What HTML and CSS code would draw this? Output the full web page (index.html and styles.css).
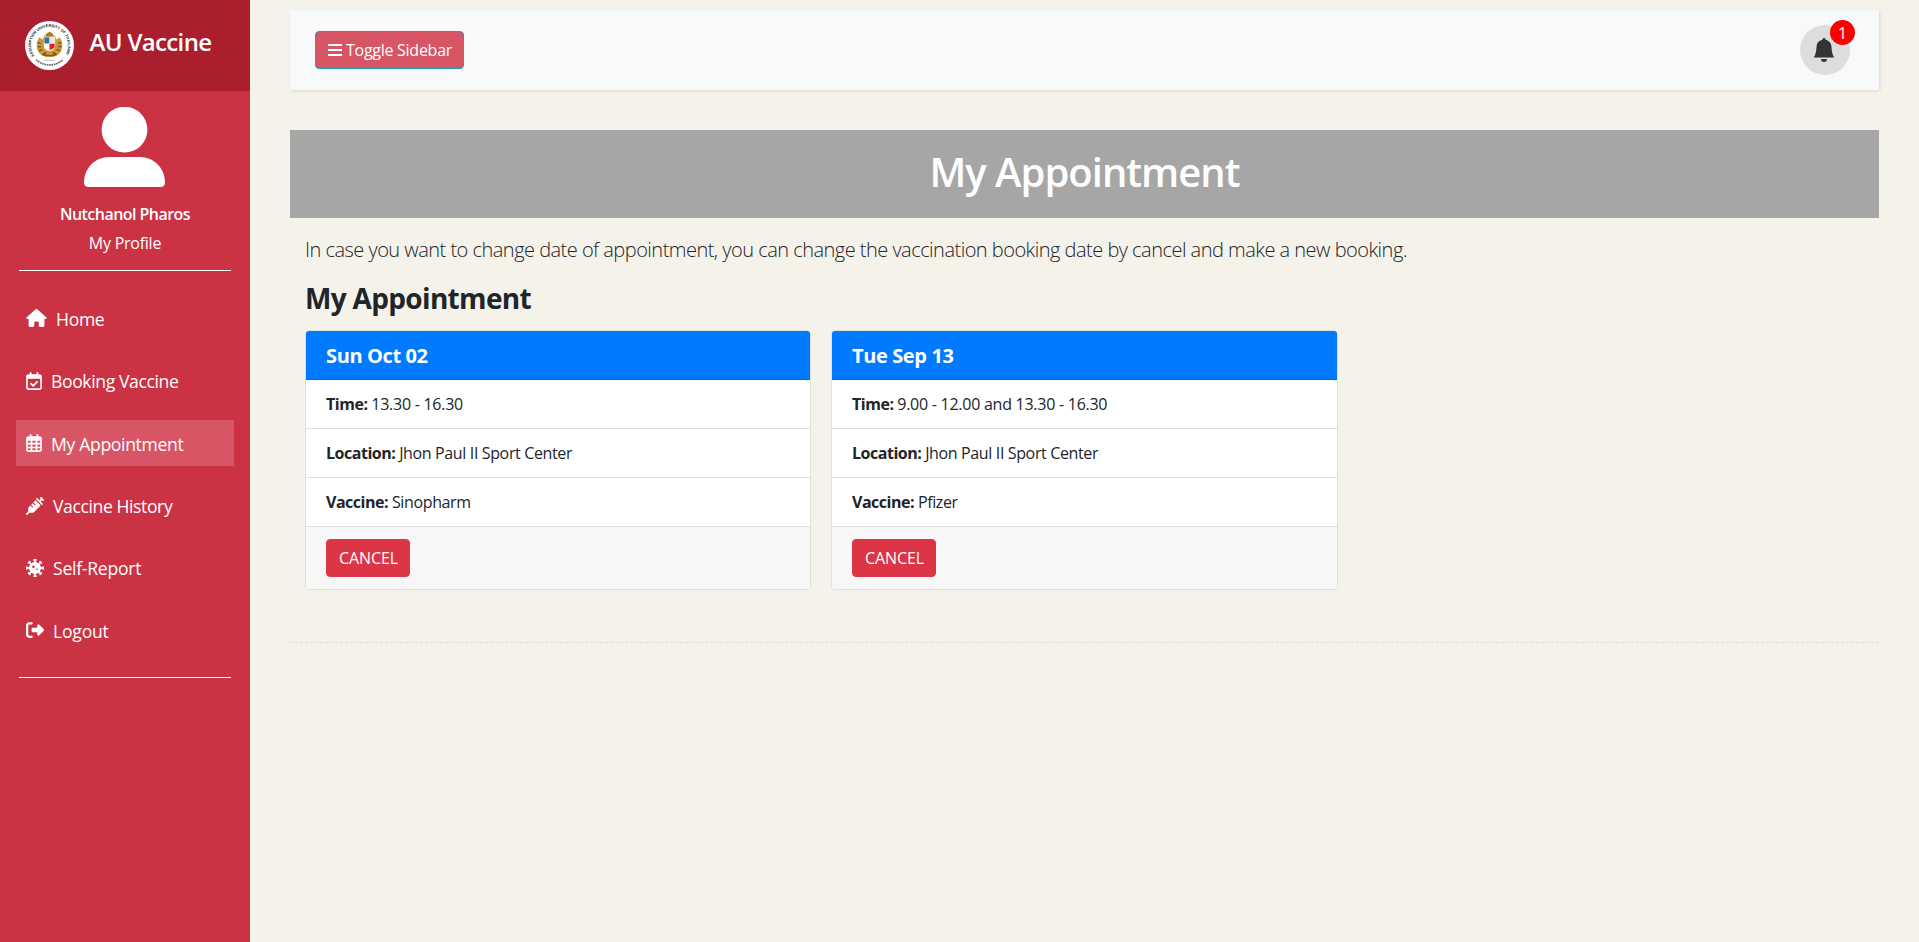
FILE: index.html
```html
<!DOCTYPE html>
<html lang="en">
<head>
<meta charset="utf-8">
<title>AU Vaccine</title>
<link rel="stylesheet" href="styles.css">
</head>
<body>
<div class="wrapper">
  <nav class="sidebar">
    <div class="brand">
      <svg class="logo" viewBox="0 0 48 48">
        <defs>
          <path id="ring-top" d="M9.300 34.300A18 18 0 1 1 38.700 34.300"/>
        </defs>
        <circle cx="24" cy="24" r="24" fill="#fff"/>
        <text class="seal-text" textLength="76" lengthAdjust="spacingAndGlyphs"><textPath href="#ring-top">ASSUMPTION UNIVERSITY OF THAILAND</textPath></text>
        <path d="M11 38A19.300 19.300 0 0 0 37 38" fill="none" stroke="#666" stroke-width="1.700" stroke-dasharray="1.600 .7"/>
        <path d="M14 16q-4 6-2 12 2 6 8 7h8q6-1 8-7 2-6-2-12l-3 2-2-4-3 1-2-4-2 4-3-1-2 4z" fill="#c99a35"/>
        <path d="M12.500 21l3 1M12.500 25l3 0M14 29l3-1M35.500 21l-3 1M35.500 25l-3 0M34 29l-3-1M18 32l3-1M30 32l-3-1" stroke="#6f4e15" stroke-width="1.200"/>
        <path d="M20 13.500q4-5.500 8 0l-1 2h-6z" fill="#a97b28"/>
        <path d="M18.500 15.500h11v9q0 4-5.500 5-5.500-1-5.500-5z" fill="#fff"/>
        <path d="M19 16h5v6h-5z" fill="#3d6d9e"/>
        <path d="M24 22h5v3q0 2-5 3.500z" fill="#e01c24"/>
        <path d="M24 16h5v6h-5z" fill="#e6e3e3"/>
        <path d="M17 32.500q7 3 14 0" fill="none" stroke="#80591b" stroke-width="1.500"/>
        <path d="M19 38.500h10" stroke="#aaa" stroke-width=".8"/>
      </svg>
      <span class="brand-name">AU Vaccine</span>
    </div>
    <div class="profile">
      <svg class="avatar" viewBox="0 0 81 80"><circle cx="40.500" cy="22.700" r="22.900"/><path d="M25 50h31c14 0 25 11.500 25 25.500 0 3-2 4.500-4.500 4.500h-72C2 80 0 78.500 0 75.500 0 61.500 11 50 25 50z"/></svg>
      <strong class="name">Nutchanol Pharos</strong>
      <a class="my-profile">My Profile</a>
    </div>
    <ul class="menu">
      <li><svg style="width:21px" viewBox="0 0 576 512"><path d="M575.800 255.500c0 18-15 32.100-32 32.100h-32l.7 160.200c0 2.700-.2 5.400-.5 8.100V472c0 22.100-17.900 40-40 40H392c-22.100 0-40-17.900-40-40V384c0-17.700-14.300-32-32-32H256c-17.700 0-32 14.300-32 32v88c0 22.100-17.900 40-40 40H104c-22.100 0-40-17.900-40-40V287.600H32c-18 0-32-14-32-32.100 0-9 3-17 10-24L266.400 8c7-7 15-8 22-8s15 2 21 7L564.800 231.500c8 7 12 15 11 24z"/></svg><span class="l-home">Home</span></li>
      <li><svg style="width:16px" viewBox="0 0 448 512"><path d="M128 0c13.300 0 24 10.700 24 24V64H296V24c0-13.300 10.700-24 24-24s24 10.700 24 24V64h40c35.300 0 64 28.700 64 64V448c0 35.300-28.700 64-64 64H64c-35.300 0-64-28.700-64-64V128C0 92.700 28.700 64 64 64h40V24c0-13.300 10.700-24 24-24zM400 192H48V448c0 8.800 7.200 16 16 16H384c8.800 0 16-7.200 16-16V192zM329 297L217 409c-9.400 9.400-24.600 9.400-33.900 0l-64-64c-9.400-9.400-9.400-24.600 0-33.900s24.600-9.400 33.900 0l47 47 95-95c9.400-9.400 24.600-9.400 33.900 0s9.400 24.600 0 33.900z"/></svg><span class="l-book">Booking Vaccine</span></li>
      <li class="active"><svg style="width:16px" viewBox="0 0 448 512"><path d="M152 24c0-13.300-10.700-24-24-24s-24 10.700-24 24V64H64C28.700 64 0 92.700 0 128V448c0 35.300 28.700 64 64 64H384c35.300 0 64-28.700 64-64V128c0-35.300-28.700-64-64-64H344V24c0-13.300-10.700-24-24-24s-24 10.700-24 24V64H152V24zM48 192h80v56H48V192zm0 104h80v64H48V296zm128 0h96v64H176V296zm144 0h80v64H320V296zm80-48H320V192h80v56zm0 160v40c0 8.800-7.200 16-16 16H320V408h80zm-128 0v56H176V408h96zm-144 0v56H64c-8.800 0-16-7.200-16-16V408h80zM272 248H176V192h96v56z"/></svg><span>My Appointment</span></li>
      <li><svg style="width:18px" viewBox="0 0 512 512"><path d="M441 7l32 32 32 32c9.400 9.400 9.400 24.600 0 33.900s-24.600 9.400-33.900 0l-15-15L417.900 128l55 55c9.400 9.400 9.400 24.600 0 33.900s-24.600 9.400-33.900 0l-72-72L295 73c-9.400-9.400-9.400-24.600 0-33.900s24.600-9.400 33.900 0l55 55L422.100 56 407 41c-9.400-9.400-9.400-24.600 0-33.900s24.600-9.400 33.900 0zM210.300 155.700l61.100-61.100c.3 .3 .6 .7 1 1l16 16 56 56 56 56 16 16c.3 .3 .6 .6 1 1l-191 191c-10.500 10.500-24.700 16.400-39.600 16.400H97.900L41 505c-9.400 9.400-24.600 9.400-33.900 0s-9.400-24.600 0-33.900l57-57V325.300c0-14.900 5.900-29.100 16.400-39.600l43.300-43.300 57 57c6.200 6.200 16.400 6.200 22.600 0s6.200-16.400 0-22.600l-57-57 41.400-41.400 57 57c6.200 6.200 16.400 6.200 22.600 0s6.200-16.400 0-22.600l-57-57z"/></svg><span class="l-hist">Vaccine History</span></li>
      <li><svg style="width:18px" viewBox="0 0 512 512">
        <g fill="none" stroke="#fff" stroke-width="50" stroke-linecap="round">
          <path d="M256 26V486M228 25h56M228 487h56M26 256H486M25 228v56M487 228v56"/>
          <path d="M256 26V486M228 25h56M228 487h56M26 256H486M25 228v56M487 228v56" transform="rotate(45 256 256)"/>
        </g>
        <path fill-rule="evenodd" d="M256 84a172 172 0 1 1 0 344 172 172 0 1 1 0-344z"/>
        <circle cx="210" cy="222" r="36" fill="#cb3244"/><circle cx="315" cy="290" r="22" fill="#cb3244"/></svg><span class="l-self">Self-Report</span></li>
      <li><svg style="width:18px" viewBox="0 0 512 512"><path d="M377.900 105.900L500.700 228.700c7.200 7.200 11.300 17.100 11.300 27.300s-4.100 20.100-11.300 27.300L377.900 406.100c-6.400 6.400-15 9.900-24 9.900-18.700 0-33.900-15.200-33.900-33.900V320H192c-17.700 0-32-14.300-32-32v-64c0-17.700 14.300-32 32-32h128v-62.100c0-18.700 15.200-33.900 33.900-33.900 9 0 17.600 3.600 24 9.900zM160 96H96c-17.700 0-32 14.300-32 32v256c0 17.700 14.300 32 32 32h64c17.700 0 32 14.300 32 32s-14.300 32-32 32H96c-53 0-96-43-96-96V128C0 75 43 32 96 32h64c17.700 0 32 14.300 32 32s-14.300 32-32 32z"/></svg><span class="l-out">Logout</span></li>
    </ul>
  </nav>

  <main class="content">
    <header class="topbar">
      <button class="btn btn-toggle"><svg viewBox="0 0 14 12"><path d="M0 0h14v2H0zM0 5h14v2H0zM0 10h14v2H0z"/></svg>Toggle Sidebar</button>
      <div class="bell">
        <svg viewBox="0 0 16 16"><path d="M8 16a2 2 0 0 0 2-2H6a2 2 0 0 0 2 2zm.995-14.901a1 1 0 1 0-1.990 0A5.002 5.002 0 0 0 3 6c0 1.098-.5 6-2 7h14c-1.500-1-2-5.902-2-7 0-2.420-1.720-4.440-4.005-4.901z"/></svg>
        <span class="count">1</span>
      </div>
    </header>

    <h1 class="banner">My Appointment</h1>

    <section class="section">
      <p class="lead">In case you want to change date of appointment, you can change the vaccination booking date by cancel and make a new booking.</p>
      <h3 class="heading">My Appointment</h3>
      <div class="cards">
        <article class="card">
          <h5 class="card-head">Sun Oct 02</h5>
          <p class="row"><b>Time:</b> <span class="time">13.30 - 16.30</span></p>
          <p class="row"><b>Location:</b> Jhon Paul II Sport Center</p>
          <p class="row"><b>Vaccine:</b> Sinopharm</p>
          <div class="card-foot"><button class="btn btn-cancel">CANCEL</button></div>
        </article>
        <article class="card">
          <h5 class="card-head">Tue Sep 13</h5>
          <p class="row"><b>Time:</b> <span class="time">9.00 - 12.00 and 13.30 - 16.30</span></p>
          <p class="row"><b>Location:</b> Jhon Paul II Sport Center</p>
          <p class="row"><b>Vaccine:</b> Pfizer</p>
          <div class="card-foot"><button class="btn btn-cancel">CANCEL</button></div>
        </article>
      </div>
    </section>
    <div class="line"></div>
  </main>
</div>
</body>
</html>
```
FILE: styles.css
```css
* { box-sizing: border-box; }

body {
  margin: 0;
  background: #f5f2e9;
  color: #212529;
  font: 400 16px/24px "Open Sans", "Noto Sans", sans-serif;
  letter-spacing: -.25px;
}

h1, h3, h5, p, ul { margin: 0; padding: 0; }

.wrapper { display: flex; min-height: 942px; }

/* Sidebar */
.sidebar {
  flex: none;
  width: 250px;
  background: #cb3244;
  color: #fff;
}
.sidebar svg { fill: #fff; }

.brand {
  display: flex;
  height: 91px;
  padding: 21px 0 0 24.500px;
  background: #aa1e2d;
}
.logo { width: 49px; height: 49px; }
.brand .seal-text {
  font: 700 3.800px "Liberation Sans", sans-serif;
  letter-spacing: 0;
  fill: #222;
}
.brand-name {
  margin-left: 16px;
  font-size: 24px;
  font-weight: 600;
  line-height: 42px;
  letter-spacing: -.65px;
}

.profile {
  display: flex;
  flex-direction: column;
  align-items: center;
  height: 180px;
  margin: 0 19px;
  padding-top: 16px;
  border-bottom: 1px solid #fff;
}
.avatar { width: 81px; height: 80px; margin-left: -1px; }
.name {
  margin-top: 15px;
  font-weight: 600;
  letter-spacing: -.54px;
}
.my-profile { margin-top: 5px; }

.menu {
  display: flex;
  flex-direction: column;
  gap: 16.400px;
  height: 407px;
  margin: 0 19px;
  padding-top: 24.400px;
  border-bottom: 1px solid #fff;
  list-style: none;
}
.menu li {
  display: flex;
  align-items: center;
  gap: 9px;
  flex: none;
  height: 46px;
  margin: 0 -3px;
  padding-left: 10px;
  font-size: 17.600px;
  letter-spacing: -.34px;
}
.menu li svg { height: 18px; }
.menu li span { padding-top: 1px; }
.menu .active { background: #d75565; }
.menu .l-book { letter-spacing: -.39px; }
.menu .l-hist { letter-spacing: -.41px; }
.menu .l-self { letter-spacing: -.26px; }
.menu .l-out { letter-spacing: -.22px; }

/* Content */
.content {
  flex: 1;
  padding: 10px 40px 0;
}

.topbar {
  display: flex;
  align-items: center;
  justify-content: space-between;
  height: 80px;
  padding: 0 29px 0 25px;
  background: #f8f9fb;
  box-shadow: 1px 1px 3px rgba(0, 0, 0, .1);
}

.btn {
  height: 38px;
  padding: 0 12px;
  border: 1px solid;
  border-radius: 4px;
  color: #fff;
  font: inherit;
  letter-spacing: -.27px;
}
.btn-toggle {
  display: flex;
  align-items: center;
  gap: 4px;
  width: 149px;
  background: #d75565;
  border-color: #17a2b8;
  white-space: nowrap;
}
.btn-toggle svg { flex: none; width: 14px; height: 12px; fill: #fff; }

.bell {
  position: relative;
  display: flex;
  align-items: center;
  justify-content: center;
  width: 50px;
  height: 50px;
  border-radius: 50%;
  background: #ddd;
}
.bell svg { width: 24px; height: 24px; margin-right: 2px; fill: #333; }
.count {
  position: absolute;
  top: -5px;
  right: -5px;
  width: 25px;
  height: 25px;
  border-radius: 50%;
  background: red;
  color: #fff;
  line-height: 27px;
  text-align: center;
}

.banner {
  height: 88px;
  margin-top: 40px;
  background: #a6a6a6;
  color: #fff;
  font-size: 40px;
  font-weight: 600;
  line-height: 84px;
  letter-spacing: -1px;
  text-align: center;
}

.section { padding: 17px 15px 0; }
.lead {
  font-size: 20px;
  font-weight: 300;
  line-height: 30px;
  letter-spacing: -.52px;
}
.heading {
  margin-top: 16px;
  font-size: 28px;
  font-weight: 700;
  line-height: 34px;
  letter-spacing: -.67px;
}

.cards {
  display: grid;
  grid-template-columns: 506px 507px;
  gap: 20px;
  margin-top: 15px;
}
.card {
  border: 1px solid #dfdfdf;
  border-radius: 4px;
  background: #fff;
  overflow: hidden;
}
.card-head {
  height: 49px;
  padding-left: 20px;
  border-bottom: 1px solid #0069da;
  background: #007bff;
  color: #fff;
  font-size: 20px;
  font-weight: 700;
  line-height: 50px;
  letter-spacing: -.38px;
}
.row {
  height: 49px;
  padding-left: 20px;
  border-bottom: 1px solid #dfdfdf;
  line-height: 49px;
  letter-spacing: -.36px;
}
.row b { letter-spacing: -.48px; }
.row .time { letter-spacing: -.26px; }
.card-foot {
  height: 62px;
  padding: 12px 20px;
  background: #f7f7f7;
}
.btn-cancel {
  width: 84px;
  border-color: #dc3545;
  background: #dc3545;
  letter-spacing: -.1px;
}

.line {
  margin-top: 52px;
  border-bottom: 1px dashed #ddd;
}
```
